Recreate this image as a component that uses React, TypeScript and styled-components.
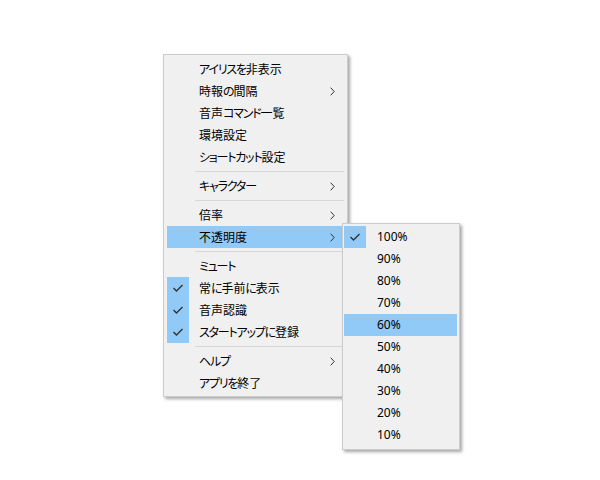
import React from "react";
import styled, { createGlobalStyle } from "styled-components";

const GlobalStyle = createGlobalStyle`
  html, body { margin: 0; padding: 0; background: #ffffff; }
  body { font-family: "Noto Sans CJK JP", "Noto Sans", sans-serif; }
`;

const Stage = styled.div`
  position: relative;
  width: 600px;
  height: 480px;
  background: #ffffff;
  overflow: hidden;
`;

const MenuPanel = styled.div<{ $left: number; $top: number; $width: number; $pad: string }>`
  position: absolute;
  left: ${(p) => p.$left}px;
  top: ${(p) => p.$top}px;
  width: ${(p) => p.$width}px;
  box-sizing: border-box;
  border: 1px solid #cccccc;
  background: #f0f0f0;
  padding: ${(p) => p.$pad};
  display: flex;
  flex-direction: column;
  box-shadow: 2px 2px 3px rgba(0, 0, 0, 0.35);
`;

const Row = styled.div<{ $active?: boolean; $textGap: number }>`
  height: 22px;
  display: grid;
  grid-template-columns: 22px 1fr 20px;
  align-items: center;
  background: ${(p) => (p.$active ? "#91c9f7" : "transparent")};
  color: #000000;
  font-size: 12px;
  font-feature-settings: "palt";
  & > .label {
    padding-left: ${(p) => p.$textGap}px;
    white-space: nowrap;
    line-height: 22px;
  }
`;

const Kana = styled.span`
  letter-spacing: -1.2px;
`;

const PercentLabel = styled.span`
  font-family: "Noto Sans", "Open Sans", sans-serif;
`;

const CheckBox = styled.div<{ $on?: boolean }>`
  width: 22px;
  height: 22px;
  display: flex;
  align-items: center;
  justify-content: center;
  background: ${(p) => (p.$on ? "#91c9f7" : "transparent")};
`;

const ArrowCell = styled.div`
  display: flex;
  align-items: center;
  justify-content: center;
  padding-right: 4px;
`;

const Separator = styled.div`
  height: 7px;
  display: flex;
  align-items: center;
  padding-left: 28px;
  & > div {
    flex: 1;
    height: 1px;
    background: #d7d7d7;
  }
`;

const Check = () => (
  <svg width="12" height="10" viewBox="0 0 12 10">
    <polyline points="1.5,5 4.5,8 10.5,2" fill="none" stroke="#333333" strokeWidth="1.4" />
  </svg>
);

const Chevron = () => (
  <svg width="5" height="9" viewBox="0 0 5 9">
    <polyline points="0.7,0.7 4.2,4.5 0.7,8.3" fill="none" stroke="#333333" strokeWidth="1" />
  </svg>
);

type Item =
  | { sep: true }
  | { sep?: false; label: string; sub?: boolean; checked?: boolean; active?: boolean };

const mainItems: Item[] = [
  { label: "アイリスを非表示" },
  { label: "時報の間隔", sub: true },
  { label: "音声コマンド一覧" },
  { label: "環境設定" },
  { label: "ショートカット設定" },
  { sep: true },
  { label: "キャラクター", sub: true },
  { sep: true },
  { label: "倍率", sub: true },
  { label: "不透明度", sub: true, active: true },
  { sep: true },
  { label: "ミュート" },
  { label: "常に手前に表示", checked: true },
  { label: "音声認識", checked: true },
  { label: "スタートアップに登録", checked: true },
  { sep: true },
  { label: "ヘルプ", sub: true },
  { label: "アプリを終了" },
];

const opacities = ["100%", "90%", "80%", "70%", "60%", "50%", "40%", "30%", "20%", "10%"];

function renderLabel(s: string) {
  return s.split(/([\u3041-\u30ff]+)/).map((part, i) =>
    /^[\u3041-\u30ff]+$/.test(part) ? <Kana key={i}>{part}</Kana> : <React.Fragment key={i}>{part}</React.Fragment>
  );
}

export default function App() {
  return (
    <>
      <GlobalStyle />
      <Stage>
        <MenuPanel $left={163} $top={54} $width={185} $pad="3px 3px 2px 3px">
          {mainItems.map((it, i) =>
            it.sep ? (
              <Separator key={i}>
                <div />
              </Separator>
            ) : (
              <Row key={i} $active={it.active} $textGap={10}>
                <CheckBox $on={it.checked}>{it.checked && <Check />}</CheckBox>
                <span className="label">{renderLabel(it.label)}</span>
                <ArrowCell>{it.sub && <Chevron />}</ArrowCell>
              </Row>
            )
          )}
        </MenuPanel>
        <MenuPanel $left={342} $top={223} $width={118} $pad="2px 2px 3px 1px">
          {opacities.map((o, i) => (
            <Row key={o} $active={o === "60%"} $textGap={11}>
              <CheckBox $on={i === 0}>{i === 0 && <Check />}</CheckBox>
              <PercentLabel className="label">{o}</PercentLabel>
              <ArrowCell />
            </Row>
          ))}
        </MenuPanel>
      </Stage>
    </>
  );
}
